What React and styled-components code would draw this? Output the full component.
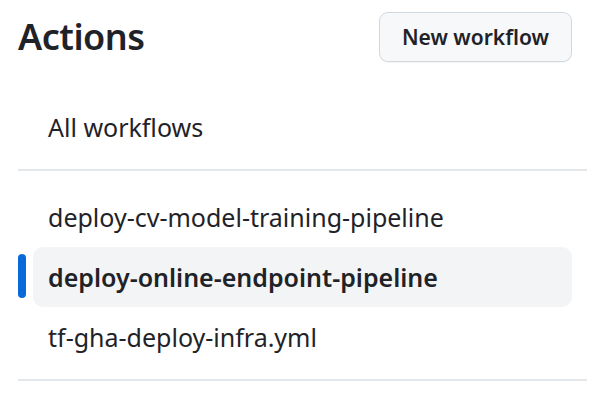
import React from 'react';
import styled, { createGlobalStyle } from 'styled-components';

const GlobalStyle = createGlobalStyle`
  body {
    margin: 0;
    background: #fff;
    font-family: "Noto Sans", "Liberation Sans", sans-serif;
    color: #1f2328;
  }
`;

const Page = styled.div`
  width: 569px;
  padding: 12px 5px 0 18px;
`;

const Header = styled.div`
  display: flex;
  align-items: center;
  justify-content: space-between;
  height: 50px;
  padding-right: 15px;
`;

const Title = styled.h2`
  margin: 0;
  font-size: 36px;
  font-weight: 600;
  letter-spacing: -0.5px;
  line-height: 1;
`;

const Button = styled.button`
  height: 50px;
  padding: 0 22px;
  border: 1.5px solid #d1d9e0;
  border-radius: 9px;
  background: #f6f8fa;
  color: #1f2328;
  font-family: inherit;
  font-size: 21px;
  font-weight: 600;
  box-shadow: 0 1px 0 rgba(31, 35, 40, 0.04);
`;

const List = styled.ul`
  list-style: none;
  margin: ${(p) => p.$top}px 0 0;
  padding: 0;
`;

const Item = styled.li`
  position: relative;
  display: flex;
  align-items: center;
  height: 60px;
  margin: 0 15px;
  padding-left: 15px;
  border-radius: 10px;
  font-size: 25px;
  font-weight: ${(p) => (p.$active ? 600 : 400)};
  background: ${(p) => (p.$active ? '#f3f4f6' : 'transparent')};

  ${(p) =>
    p.$active &&
    `
    &::before {
      content: '';
      position: absolute;
      left: -15px;
      top: 7px;
      width: 8px;
      height: 44px;
      border-radius: 4px;
      background: #0969da;
    }
  `}
`;

const Divider = styled.hr`
  margin: ${(p) => p.$top}px 0 0;
  border: 0;
  height: 2px;
  background: #e5e8eb;
`;

const workflows = [
  'deploy-cv-model-training-pipeline',
  'deploy-online-endpoint-pipeline',
  'tf-gha-deploy-infra.yml',
];

export default function App() {
  return (
    <Page>
      <GlobalStyle />
      <Header>
        <Title>Actions</Title>
        <Button>New workflow</Button>
      </Header>
      <List $top={35}>
        <Item>All workflows</Item>
      </List>
      <Divider $top={12} />
      <List $top={16}>
        {workflows.map((w, i) => (
          <Item key={w} $active={i === 1}>
            {w}
          </Item>
        ))}
      </List>
      <Divider $top={12} />
    </Page>
  );
}
